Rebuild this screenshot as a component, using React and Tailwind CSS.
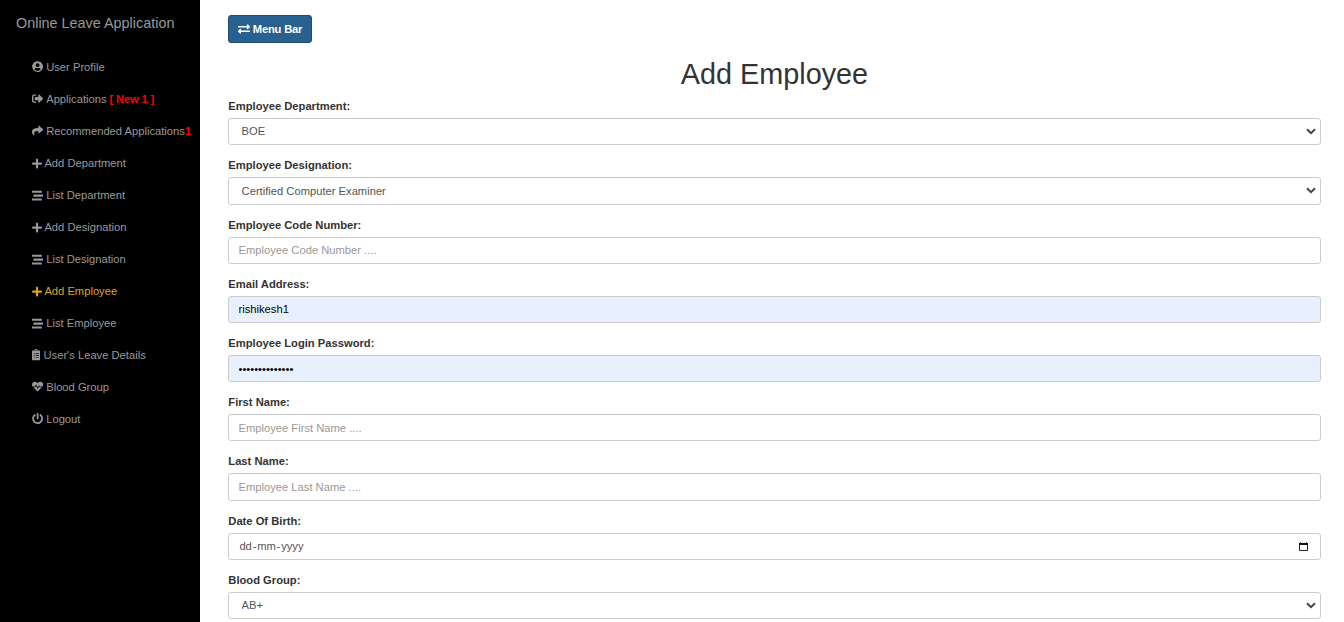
import React from "react";
import {
  FaUserCircle,
  FaSignOutAlt,
  FaShare,
  FaPlus,
  FaStream,
  FaClipboardList,
  FaHeartbeat,
  FaPowerOff,
  FaExchangeAlt,
} from "react-icons/fa";

const WIDE = "w-[11.2px] mr-[3px]";
const BARS = "w-[11.2px] mr-[3px] mt-px";
const CROSS = "w-[10px] mr-[2.4px] mt-px";

const NAV = [
  { Icon: FaUserCircle, size: WIDE, label: "User Profile" },
  { Icon: FaSignOutAlt, size: WIDE, label: "Applications", badge: " [ New 1 ]" },
  { Icon: FaShare, size: WIDE, label: "Recommended Applications", badge: "1" },
  { Icon: FaPlus, size: CROSS, label: "Add Department" },
  { Icon: FaStream, size: BARS, label: "List Department" },
  { Icon: FaPlus, size: CROSS, label: "Add Designation" },
  { Icon: FaStream, size: BARS, label: "List Designation" },
  { Icon: FaPlus, size: CROSS, label: "Add Employee", active: true },
  { Icon: FaStream, size: BARS, label: "List Employee" },
  { Icon: FaClipboardList, size: "w-[8.4px] mr-[3.1px]", label: "User's Leave Details" },
  { Icon: FaHeartbeat, size: WIDE, label: "Blood Group" },
  { Icon: FaPowerOff, size: WIDE, label: "Logout" },
];

const BOX = "flex h-[27.2px] w-full items-center rounded-[3px] border border-[#ccc] text-[11.2px] text-[#555]";

function Field({ label, children }) {
  return (
    <div className="mb-3">
      <label className="mb-1 block h-4 pl-[0.3px] text-[11.2px] leading-4 font-bold text-[#333]">{label}</label>
      {children}
    </div>
  );
}

function Select({ value }) {
  return (
    <div className={`${BOX} bg-white pr-[4px] pl-[12.6px]`}>
      <select className="h-full flex-1 appearance-none bg-transparent outline-none" defaultValue={value}>
        <option>{value}</option>
      </select>
      <svg className="h-[7px] w-[10px]" viewBox="0 0 10 7" fill="none" stroke="#444" strokeWidth="2">
        <path d="M1 1.2 L5 5.2 L9 1.2" />
      </svg>
    </div>
  );
}

function TextInput({ placeholder }) {
  return (
    <input
      className={`${BOX} bg-white px-[9.5px] outline-none placeholder:text-[#999] placeholder:opacity-100`}
      placeholder={placeholder}
    />
  );
}

function FilledInput({ value }) {
  return <input className={`${BOX} bg-[#e8f0fe] px-[9.5px] text-black! outline-none`} defaultValue={value} />;
}

function DateInput() {
  return (
    <div className={`${BOX} justify-between bg-white pr-[12px] pl-[10.4px]`}>
      <span className="flex">
        <span>dd</span>
        <span className="px-[0.8px]">-</span>
        <span>mm</span>
        <span className="px-[0.8px]">-</span>
        <span>yyyy</span>
      </span>
      <svg className="h-[9px] w-[9px]" viewBox="0 0 9 9" fill="none">
        <path d="M0.5 1.5H8.5V8.5H0.5Z" stroke="#222" />
        <path d="M0 1H9V3H0Z" fill="#111" />
        <path d="M1.5 0V1M7.5 0V1" stroke="#555" />
      </svg>
    </div>
  );
}

export default function App() {
  return (
    <div className="flex h-[622px] w-full overflow-hidden bg-white font-['Liberation_Sans',Arial,sans-serif]">
      <aside className="w-[200px] shrink-0 bg-black text-[#999]">
        <div className="h-[51px] pl-4 text-[14.4px] leading-[46px] whitespace-nowrap">Online Leave Application</div>
        <nav>
          {NAV.map(({ Icon, size, label, badge, active }) => (
            <a
              key={label}
              className={`flex h-8 items-center pl-8 text-[11.2px] whitespace-pre ${active ? "text-[#daa520]" : ""}`}
            >
              <Icon className={`h-[11.2px] shrink-0 ${size}`} />
              <span>{label}</span>
              {badge && <span className="font-bold tracking-[-0.15px] text-[#f00]">{badge}</span>}
            </a>
          ))}
        </nav>
      </aside>
      <main className="flex-1 pt-[15px] pr-[23px] pl-7">
        <button className="flex h-7 w-[84px] items-center justify-center gap-[3px] rounded-[3px] border border-[#204d74] bg-[#286090] text-[11.2px] font-bold tracking-[-0.2px] text-white">
          <FaExchangeAlt className="h-[12px] w-[12px]" />
          Menu Bar
        </button>
        <h1 className="mt-[15px] mb-[8.2px] h-8 text-center text-[28.8px] leading-8 text-[#333]">Add Employee</h1>
        <form>
          <Field label="Employee Department:"><Select value="BOE" /></Field>
          <Field label="Employee Designation:"><Select value="Certified Computer Examiner" /></Field>
          <Field label="Employee Code Number:"><TextInput placeholder="Employee Code Number ...." /></Field>
          <Field label="Email Address:"><FilledInput value="rishikesh1" /></Field>
          <Field label="Employee Login Password:"><FilledInput value="••••••••••••••" /></Field>
          <Field label="First Name:"><TextInput placeholder="Employee First Name ...." /></Field>
          <Field label="Last Name:"><TextInput placeholder="Employee Last Name ...." /></Field>
          <Field label="Date Of Birth:"><DateInput /></Field>
          <Field label="Blood Group:"><Select value="AB+" /></Field>
        </form>
      </main>
    </div>
  );
}
